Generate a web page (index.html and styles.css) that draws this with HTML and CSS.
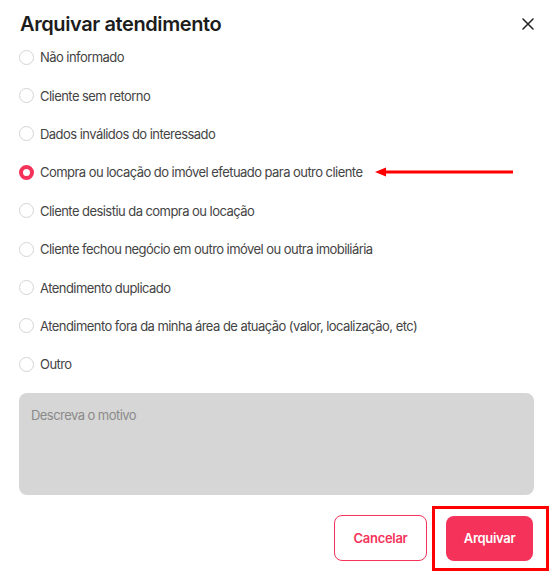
FILE: index.html
```html
<!DOCTYPE html>
<html lang="pt-BR">
<head>
  <meta charset="UTF-8">
  <meta name="viewport" content="width=device-width, initial-scale=1.0">
  <title>Arquivar atendimento</title>
  <link rel="stylesheet" href="styles.css">
</head>
<body>
  <div class="modal">
    <div class="modal-header">
      <h2 class="modal-title">Arquivar atendimento</h2>
      <button class="close-button" aria-label="Fechar">
        <svg width="12" height="12" viewBox="0 0 12 12"><path d="M1 1L11 11M11 1L1 11" stroke="#222" stroke-width="1.5" stroke-linecap="round"/></svg>
      </button>
    </div>

    <div class="options" id="options">
      <label class="option"><input type="radio" name="motivo"><span>Não informado</span></label>
      <label class="option"><input type="radio" name="motivo"><span>Cliente sem retorno</span></label>
      <label class="option"><input type="radio" name="motivo"><span>Dados inválidos do interessado</span></label>
      <label class="option">
        <input type="radio" name="motivo" checked><span>Compra ou locação do imóvel efetuado para outro cliente</span>
        <svg class="arrow" width="140" height="10" viewBox="0 0 140 10"><path d="M10 5H138" stroke="#f00" stroke-width="3"/><path d="M0 5L11 0.5V9.5Z" fill="#f00"/></svg>
      </label>
      <label class="option"><input type="radio" name="motivo"><span>Cliente desistiu da compra ou locação</span></label>
      <label class="option"><input type="radio" name="motivo"><span>Cliente fechou negócio em outro imóvel ou outra imobiliária</span></label>
      <label class="option"><input type="radio" name="motivo"><span>Atendimento duplicado</span></label>
      <label class="option"><input type="radio" name="motivo"><span>Atendimento fora da minha área de atuação (valor, localização, etc)</span></label>
      <label class="option"><input type="radio" name="motivo"><span>Outro</span></label>
    </div>

    <textarea class="reason" placeholder="Descreva o motivo"></textarea>

    <div class="modal-footer">
      <button class="btn btn-outline">Cancelar</button>
      <div class="highlight">
        <button class="btn btn-primary">Arquivar</button>
      </div>
    </div>
  </div>

  <script src="script.js"></script>
</body>
</html>
```

FILE: styles.css
```css
:root {
  --primary: #f5325a;
  --text: #1f1f1f;
  --muted: #444;
}

* {
  margin: 0;
  padding: 0;
  box-sizing: border-box;
}

body {
  font-family: Inter, "Noto Sans", sans-serif;
  background: #ffffff;
  color: var(--text);
  width: 556px;
  height: 576px;
  overflow: hidden;
}

.modal {
  display: flex;
  flex-direction: column;
  padding: 0 22px 0 19px;
}

.modal-header {
  display: flex;
  justify-content: space-between;
  align-items: center;
  height: 50px;
  padding-bottom: 2px;
}

.modal-title {
  font-size: 20px;
  font-weight: 600;
  letter-spacing: -0.4px;
  color: #1c1c1c;
  padding-left: 1px;
}

.close-button {
  background: none;
  border: none;
  width: 12px;
  height: 12px;
  display: flex;
  cursor: pointer;
}

.options {
  height: 333px;
  overflow-y: auto;
  scrollbar-width: none;
  margin-bottom: 10px;
}

.option {
  position: relative;
  display: flex;
  align-items: center;
  gap: 6px;
  height: 38.4px;
  font-size: 13px;
  letter-spacing: -0.55px;
  color: var(--muted);
  cursor: pointer;
}

.option input {
  appearance: none;
  width: 15px;
  height: 15px;
  border: 1px solid #d4d4d4;
  border-radius: 50%;
  flex-shrink: 0;
}

.option input:checked {
  border: 4px solid var(--primary);
}

.arrow {
  position: absolute;
  left: 356px;
  top: 14px;
}

.reason {
  height: 102px;
  border: none;
  border-radius: 8px;
  background: #d6d6d6;
  padding: 14px 12px;
  font-family: inherit;
  font-size: 13px;
  letter-spacing: -0.55px;
  resize: none;
}

.reason::placeholder {
  color: #8a8a8a;
}

.modal-footer {
  display: flex;
  justify-content: flex-end;
  align-items: center;
  gap: 19px;
  margin-top: 20px;
  padding-right: 1px;
}

.btn {
  height: 46px;
  border-radius: 8px;
  font-family: inherit;
  font-size: 13px;
  font-weight: 600;
  letter-spacing: -0.3px;
  cursor: pointer;
}

.btn-outline {
  width: 93px;
  background: #fff;
  color: var(--primary);
  border: 1px solid var(--primary);
}

.btn-primary {
  width: 87px;
  height: 45px;
  background: var(--primary);
  color: #fff;
  border: none;
}

.highlight {
  position: relative;
}

.highlight::after {
  content: "";
  position: absolute;
  left: -14px;
  right: -16px;
  top: -10px;
  bottom: -10px;
  border: 3px solid #f00;
  pointer-events: none;
}
```

FILE: script.js
```js
const options = document.getElementById("options");
options.scrollTop = 12;
```
